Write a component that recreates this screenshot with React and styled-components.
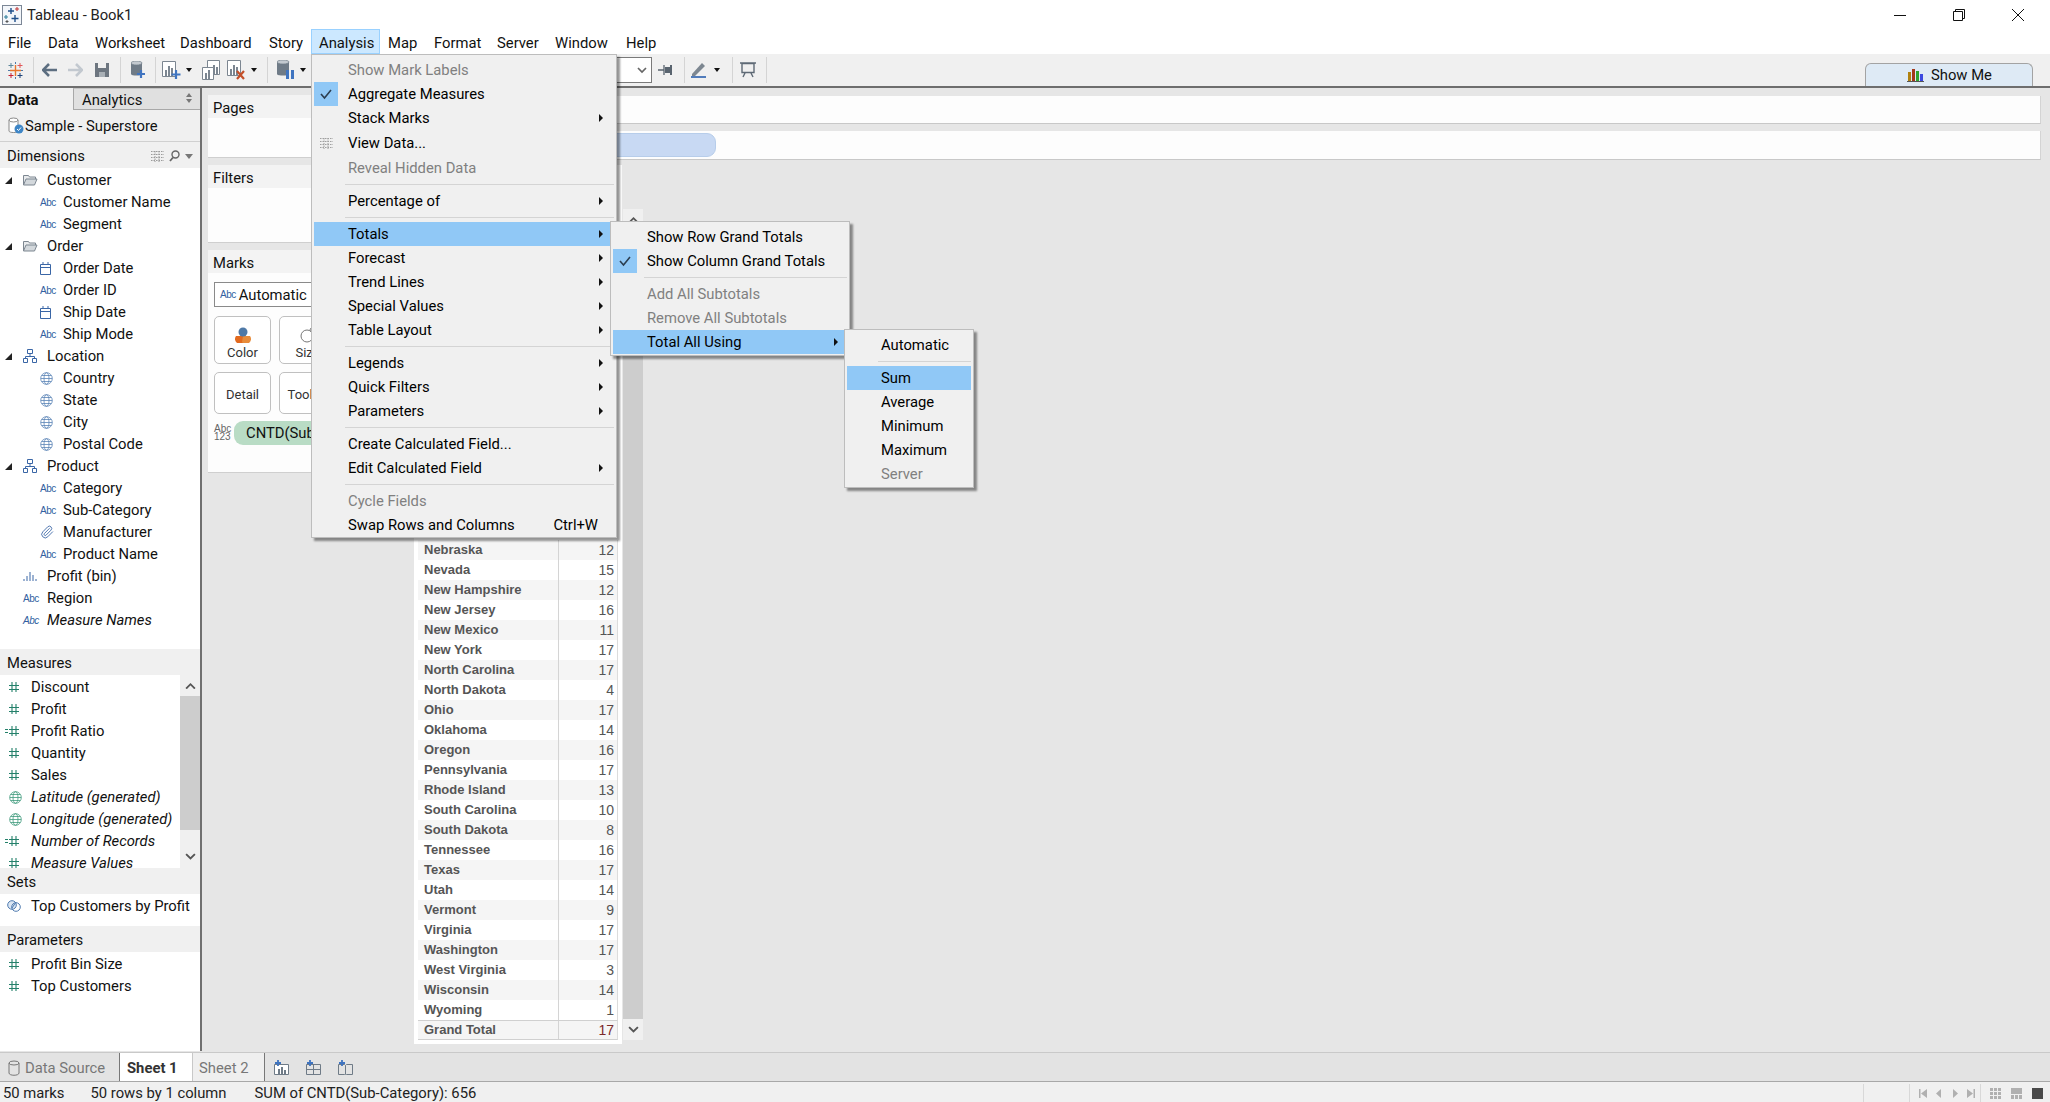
import React from "react";
import styled, { createGlobalStyle } from "styled-components";
import { Paperclip } from "lucide-react";

const UI_FONT = `Roboto, "Noto Sans", sans-serif`;

const GlobalStyle = createGlobalStyle`
    html, body {
        margin: 0;
        padding: 0;
        background: #fff;
    }
    body {
        font-family: ${UI_FONT};
        font-size: 14.8px;
        color: #111;
        overflow: hidden;
    }
    * {
        box-sizing: border-box;
    }
`;

const Page = styled.div`
    position: relative;
    width: 2050px;
    height: 1102px;
    overflow: hidden;
    display: flex;
    flex-direction: column;
    background: #fff;
`;

const TitleBar = styled.div`
    height: 29px;
    display: flex;
    align-items: center;
    padding-left: 2px;
    gap: 5px;
    color: #222;
`;

const WindowButtons = styled.div`
    margin-left: auto;
    display: flex;
    align-items: center;
    height: 100%;
    padding-right: 26px;
    gap: 47px;
`;

const MenuBar = styled.div`
    height: 25px;
    display: flex;
    align-items: stretch;
`;

const MenuName = styled.div`
    flex: none;
    width: ${(p) => p.$w}px;
    display: flex;
    align-items: center;
    padding: 2px 0 0 7px;
    border: 1px solid ${(p) => (p.$open ? "#99d1ff" : "transparent")};
    background: ${(p) => (p.$open ? "#cce8ff" : "transparent")};
`;

const Toolbar = styled.div`
    height: 34px;
    display: flex;
    align-items: center;
    padding-left: 7px;
    background: #f0f0f0;
    border-bottom: 2px solid #6e6e6e;
`;

const Tool = styled.span`
    display: inline-flex;
    flex: none;
    margin-left: ${(p) => p.$ml || 0}px;
`;

const ToolSep = styled.span`
    flex: none;
    width: 1px;
    height: 26px;
    background: #d4d4d4;
    margin-left: ${(p) => p.$ml || 0}px;
`;

const DropArrow = styled.span`
    flex: none;
    width: 0;
    height: 0;
    border-left: 3px solid transparent;
    border-right: 3px solid transparent;
    border-top: 4px solid #111;
    margin-left: ${(p) => p.$ml || 0}px;
`;

const ToolSelect = styled.div`
    flex: none;
    width: 90px;
    height: 26px;
    margin-left: ${(p) => p.$ml || 0}px;
    border: 1px solid #7a7a7a;
    background: #fff;
    display: flex;
    align-items: center;
    justify-content: flex-end;
    padding-right: 4px;
`;

const ShowMe = styled.div`
    margin-left: auto;
    margin-right: 17px;
    align-self: flex-end;
    width: 168px;
    height: 23px;
    display: flex;
    align-items: center;
    padding-left: 41px;
    gap: 7px;
    background: #deeaf5;
    border: 1px solid #a3a3a3;
    border-bottom: none;
    border-radius: 6px 6px 0 0;
`;

const Body = styled.div`
    flex: 1;
    display: flex;
    min-height: 0;
    background: #e6e6e6;
`;

const DataPane = styled.div`
    width: 202px;
    flex: none;
    display: flex;
    flex-direction: column;
    background: #fff;
    border-right: 2px solid #707070;
    margin-bottom: 1px;
`;

const PaneTabs = styled.div`
    height: 22px;
    display: flex;
    background: #f0f0f0;
`;

const PaneTab = styled.div`
    display: flex;
    align-items: center;
    font-weight: ${(p) => (p.$active ? 700 : 400)};
    width: ${(p) => (p.$active ? "73px" : "auto")};
    flex: ${(p) => (p.$active ? "none" : "1")};
    padding: 2px 0 0 8px;
    background: ${(p) => (p.$active ? "#f0f0f0" : "#e0e0e0")};
    border-left: ${(p) => (p.$active ? "none" : "1px solid #a8a8a8")};
    border-top: ${(p) => (p.$active ? "none" : "1px solid #c4c4c4")};
    border-bottom: ${(p) => (p.$active ? "none" : "1px solid #a8a8a8")};
`;

const SpinIcon = styled.span`
    margin-left: auto;
    margin-right: 8px;
    margin-bottom: 4px;
    display: inline-flex;
`;

const SourceRow = styled.div`
    height: 32px;
    display: flex;
    align-items: center;
    padding-left: 8px;
    gap: 1px;
    background: #f0f0f0;
    border-bottom: 1px solid #d0d0d0;
`;

const SectionHead = styled.div`
    height: 26px;
    flex: none;
    display: flex;
    align-items: center;
    padding: 2px 0 0 7px;
    background: #f0f0f0;
`;

const HeadTools = styled.div`
    margin-left: auto;
    display: flex;
    align-items: center;
    gap: 5px;
    padding-right: 7px;
`;

const Tree = styled.div`
    height: 481px;
    padding-top: 1px;
`;

const FieldRow = styled.div`
    height: 22px;
    display: flex;
    align-items: center;
    white-space: nowrap;
    padding-left: ${(p) => p.$pad}px;
    font-style: ${(p) => (p.$italic ? "italic" : "normal")};
`;

const IconSlot = styled.span`
    flex: none;
    width: ${(p) => p.$w}px;
    display: inline-flex;
    align-items: center;
`;

const NudgedIcon = styled.span`
    display: inline-flex;
    margin-left: ${(p) => p.$ml}px;
`;

const AbcMark = styled.span`
    font-family: "Liberation Sans", sans-serif;
    font-size: 10px;
    letter-spacing: -0.5px;
    color: #335f9f;
`;

const MeasureWrap = styled.div`
    height: 193px;
    flex: none;
    display: flex;
`;

const MeasureList = styled.div`
    flex: 1;
    overflow: hidden;
    padding-top: 1px;
`;

const MiniScroll = styled.div`
    width: 20px;
    flex: none;
    display: flex;
    flex-direction: column;
    align-items: center;
    background: #f0f0f0;
`;

const ScrollEnd = styled.div`
    height: ${(p) => p.$h}px;
    flex: none;
    width: 100%;
    display: flex;
    align-items: center;
    justify-content: center;
    padding-top: ${(p) => p.$pt || 0}px;
`;

const ScrollThumb = styled.div`
    flex: ${(p) => (p.$h ? "none" : "1")};
    height: ${(p) => (p.$h ? `${p.$h}px` : "auto")};
    width: 100%;
    background: #cdcdcd;
`;

const ParamBlock = styled.div`
    height: 32px;
    flex: none;
    padding-top: 1px;
`;

const CardsColumn = styled.div`
    width: 198px;
    flex: none;
    display: flex;
    flex-direction: column;
    gap: 7px;
    padding: 7px 0 0 6px;
`;

const Card = styled.div`
    height: ${(p) => p.$h}px;
    background: #fdfdfd;
    border-bottom: 1px solid #cfcfcf;
    display: flex;
    flex-direction: column;
`;

const CardHead = styled.div`
    height: 23px;
    flex: none;
    display: flex;
    align-items: center;
    padding: 2px 0 0 5px;
    background: #f3f3f3;
`;

const MarksBody = styled.div`
    padding: 9px 6px 0;
    display: flex;
    flex-direction: column;
`;

const MarkType = styled.div`
    height: 25px;
    border: 1px solid #8a8a8a;
    background: #fff;
    display: flex;
    align-items: center;
    padding-left: 5px;
    gap: 3px;
`;

const MarkButtons = styled.div`
    display: grid;
    grid-template-columns: 57px 57px 57px;
    grid-template-rows: 48px 42px;
    gap: 8px;
    margin-top: 9px;
`;

const MarkButton = styled.div`
    border: 1px solid #c0c0c0;
    border-radius: 5px;
    background: #fff;
    display: flex;
    flex-direction: column;
    align-items: center;
    justify-content: flex-end;
    padding-bottom: ${(p) => (p.$plain ? "11px" : "3px")};
    font-size: 13px;
    color: #333;
    gap: 2px;
`;

const PillRow = styled.div`
    display: flex;
    align-items: center;
    margin-top: 7px;
    gap: 5px;
`;

const StackMark = styled.span`
    font-family: "Liberation Sans", sans-serif;
    font-size: 10px;
    line-height: 8px;
    color: #666;
    width: 15px;
    text-align: center;
`;

const FieldPill = styled.div`
    width: 150px;
    height: 24px;
    display: flex;
    align-items: center;
    padding-left: 12px;
    white-space: nowrap;
    overflow: hidden;
    background: #b9dcc5;
    border-radius: 9px;
`;

const ViewColumn = styled.div`
    flex: 1;
    min-width: 0;
    display: flex;
    flex-direction: column;
    padding: 8px 9px 8px 8px;
`;

const Shelf = styled.div`
    height: ${(p) => p.$h}px;
    flex: none;
    margin-bottom: 7px;
    background: #fdfdfd;
    border-bottom: 1px solid #c8c8c8;
    border-right: 1px solid #d4d4d4;
    display: flex;
    align-items: center;
    padding-left: 100px;
`;

const ShelfPill = styled.div`
    width: 208px;
    height: 24px;
    background: #c8d9f3;
    border: 1px solid #b7cdea;
    border-radius: 9px;
`;

const Stage = styled.div`
    flex: 1;
    min-height: 0;
    margin-top: -2px;
    padding-left: 6px;
    display: flex;
    gap: 1px;
`;

const VizPanel = styled.div`
    width: 208px;
    flex: none;
    background: #fff;
    padding: 4px;
    display: flex;
    flex-direction: column;
    justify-content: flex-end;
`;

const DataRow = styled.div`
    height: 20px;
    flex: none;
    display: grid;
    grid-template-columns: 141px 1fr;
    background: ${(p) => (p.$odd ? "#f5f5f5" : "#fff")};
    border-right: 1px solid #dcdcdc;
    color: #555;
    font-family: "Liberation Sans", sans-serif;
    font-size: 13px;
    line-height: 20px;
`;

const TotalRow = styled(DataRow)`
    background: #f5f5f5;
    border-top: 1px solid #d0d0d0;
    border-bottom: 1px solid #d0d0d0;
    line-height: 18px;
`;

const RowName = styled.div`
    padding-left: 6px;
    font-weight: 700;
    border-right: 1px solid #d4d4d4;
`;

const RowValue = styled.div`
    text-align: right;
    padding-right: 3px;
    font-size: 14px;
    color: ${(p) => (p.$total ? "#7c2a2a" : "#555")};
`;

const VizScroll = styled(MiniScroll)`
    width: 20px;
    margin-top: 44px;
    margin-bottom: 4px;
`;

const TabStrip = styled.div`
    height: 30px;
    flex: none;
    display: flex;
    background: #e3e3e3;
    border-top: 1px solid #c9c9c9;
    border-bottom: 1px solid #a8a8a8;
`;

const SheetTab = styled.div`
    width: ${(p) => p.$w}px;
    flex: none;
    display: flex;
    align-items: center;
    gap: 5px;
    padding: 2px 0 0 ${(p) => p.$pad}px;
    font-weight: ${(p) => (p.$active ? 700 : 400)};
    color: ${(p) => (p.$active ? "#333" : "#777")};
    background: ${(p) => p.$bg};
    border-right: 1px solid ${(p) => p.$line};
`;

const TabTools = styled.div`
    display: flex;
    align-items: center;
    padding-left: 9px;
    gap: 17px;
`;

const StatusBar = styled.div`
    height: 20px;
    flex: none;
    display: flex;
    align-items: center;
    padding-top: 2px;
    background: #f0f0f0;
    color: #222;
`;

const StatusText = styled.span`
    margin-left: ${(p) => p.$ml}px;
    white-space: nowrap;
`;

const StatusRight = styled.div`
    margin-left: auto;
    display: flex;
    align-items: stretch;
    height: 100%;
`;

const StatusCell = styled.div`
    width: ${(p) => p.$w}px;
    display: flex;
    align-items: center;
    gap: ${(p) => p.$gap || 0}px;
    padding-left: ${(p) => p.$pad || 0}px;
    border-left: 1px solid #d8d8d8;
`;

const Dropdown = styled.div`
    position: absolute;
    left: ${(p) => p.$left}px;
    top: ${(p) => p.$top}px;
    width: ${(p) => p.$width}px;
    height: ${(p) => p.$height}px;
    padding: 3px 2px;
    background: #f0f0f0;
    border: 1px solid #bdbdbd;
    box-shadow: 3px 3px 2px rgba(0, 0, 0, 0.42);
`;

const MenuItem = styled.div`
    position: relative;
    height: 24px;
    margin-top: ${(p) => p.$mt || 0}px;
    display: flex;
    align-items: center;
    padding-left: 34px;
    padding-right: ${(p) => p.$pr || 11}px;
    white-space: nowrap;
    color: ${(p) => (p.$off ? "#808080" : "#000")};
    background: ${(p) => (p.$hot ? "#90c8f6" : "transparent")};
`;

const MenuCheck = styled.span`
    position: absolute;
    left: 0;
    top: 0;
    width: 24px;
    height: 24px;
    display: flex;
    align-items: center;
    justify-content: center;
    background: ${(p) => (p.$on ? "#90c8f6" : "transparent")};
`;

const SubArrow = styled.span`
    margin-left: auto;
    width: 0;
    height: 0;
    border-top: 4px solid transparent;
    border-bottom: 4px solid transparent;
    border-left: 4px solid #111;
`;

const Shortcut = styled.span`
    margin-left: auto;
    margin-right: 5px;
`;

const MenuSep = styled.div`
    height: 9px;
    margin-left: ${(p) => p.$ml || 31}px;
    display: flex;
    align-items: center;

    &::after {
        content: "";
        display: block;
        width: 100%;
        height: 1px;
        background: #d4d4d4;
    }
`;

const BLUE = "#3a66a6";
const TEAL = "#24806a";

const AppIcon = () => (
    <svg width="20" height="20" viewBox="0 0 20 20">
        <rect x="0.5" y="0.5" width="19" height="19" fill="#f3f6fa" stroke="#7c8796" />
        <path d="M9 3v6M6 6h6" stroke="#1f4f8a" strokeWidth="1.4" />
        <path d="M15 2v4M13 4h4" stroke="#c23b3b" strokeWidth="1.1" />
        <path d="M4 10v4M2 12h4" stroke="#2f7f9c" strokeWidth="1.1" />
        <path d="M13 10v7M9.5 13.500h7" stroke="#1f4f8a" strokeWidth="1.4" />
        <path d="M5 15v3M3.500 16.500h3" stroke="#555" strokeWidth="1" />
    </svg>
);

const TableauLogo = () => (
    <svg width="17" height="17" viewBox="0 0 17 17">
        <path d="M8.500 3v11M3 8.500h11" stroke="#e8762b" strokeWidth="1.400" />
        <path d="M4 1v5M1.500 3.500h5" stroke="#5b879b" strokeWidth="1" />
        <path d="M13 1v5M10.500 3.500h5" stroke="#e15759" strokeWidth="1" />
        <path d="M4 11v5M1.500 13.500h5" stroke="#c72035" strokeWidth="1" />
        <path d="M13 11v5M10.500 13.500h5" stroke="#1f447a" strokeWidth="1" />
        <path d="M1 8.500h2M14 8.500h2M8.500 0v2M8.500 15v2" stroke="#4e79a7" strokeWidth="1" />
    </svg>
);

const ArrowIcon = ({ color, flip }) => (
    <svg width="15" height="14" viewBox="0 0 15 14" style={flip ? { transform: "scaleX(-1)" } : undefined}>
        <path d="M7 1L1 7l6 6M2 7h13" fill="none" stroke={color} strokeWidth="2.600" />
    </svg>
);

const SaveIcon = () => (
    <svg width="14" height="14" viewBox="0 0 14 14">
        <path d="M0 0h14v14H0z" fill="#6d7680" />
        <path d="M3 0h8v5H3z" fill="#f0f0f0" />
        <path d="M4 9h6v5H4z" fill="#a9b0b6" />
    </svg>
);

const Cylinder = ({ x = 0, y = 0, w = 11, h = 15 }) => (
    <g>
        <path d={`M${x} ${y + 2}v${h - 4}c0 2 ${w} 2 ${w} 0v-${h - 4}z`} fill="#6f7b87" />
        <ellipse cx={x + w / 2} cy={y + 2} rx={w / 2} ry="2" fill="#c3c9cf" stroke="#6f7b87" strokeWidth="0.700" />
    </g>
);

const AddDataIcon = () => (
    <svg width="15" height="18" viewBox="0 0 15 18">
        <Cylinder />
        <path d="M10 9v8M6 13h8" stroke="#3f74c0" strokeWidth="2.200" />
    </svg>
);

const PauseDataIcon = () => (
    <svg width="17" height="20" viewBox="0 0 17 20">
        <Cylinder w={12} h={16} />
        <path d="M9 10h3v9H9zM14 10h3v9h-3z" fill="#3f74c0" />
    </svg>
);

const Bars = () => (
    <g>
        <path d="M.5 .5h13v15H.5z" fill="#fff" stroke="#7c8691" />
        <path d="M3 9h2v6H3zM6 5h2v10H6zM9 7h2v8H9z" fill="#7c8691" />
    </g>
);

const NewSheetIcon = () => (
    <svg width="20" height="19" viewBox="0 0 20 19">
        <Bars />
        <path d="M14 9v9M9.500 13.500h9" stroke="#3f74c0" strokeWidth="2.200" />
    </svg>
);

const DuplicateSheetIcon = () => (
    <svg width="18" height="20" viewBox="0 0 18 20">
        <path d="M5.500 .5h12v14h-12z" fill="#fff" stroke="#7c8691" />
        <path d="M8 9h2v5H8zM11 5h2v9h-2zM14 7h2v7h-2z" fill="#7c8691" />
        <path d="M.5 7.500h11v12H.5z" fill="#fff" stroke="#7c8691" />
        <path d="M3 13h2v6H3zM6 10h2v9H6z" fill="#7c8691" />
    </svg>
);

const ClearSheetIcon = () => (
    <svg width="19" height="20" viewBox="0 0 19 20">
        <Bars />
        <path d="M10 11l7 8M17 11l-7 8" stroke="#c4502a" strokeWidth="2.200" />
    </svg>
);

const PinIcon = () => (
    <svg width="16" height="14" viewBox="0 0 16 14">
        <path d="M0 7h6M6 2v10" stroke="#59646f" strokeWidth="1.300" fill="none" />
        <path d="M7 4h5v6H7zM12 2h2v10h-2z" fill="#59646f" />
    </svg>
);

const PenIcon = () => (
    <svg width="16" height="16" viewBox="0 0 16 16">
        <path d="M1 12L11 1l3 3L4 14H1z" fill="#7d8791" />
        <path d="M0 15h15" stroke="#3f6fb5" strokeWidth="1.800" />
    </svg>
);

const PresentIcon = () => (
    <svg width="16" height="16" viewBox="0 0 16 16">
        <path d="M0 1h16M2 1.500h12v9H2zM5 11l-2 4M11 11l2 4" fill="none" stroke="#5e6975" strokeWidth="1.400" />
    </svg>
);

const Chevron = ({ down, size = 11, color = "#555" }) => (
    <svg width={size} height={size * 0.7} viewBox="0 0 10 7">
        <path d={down ? "M1 1l4 4 4-4" : "M1 6l4-4 4 4"} fill="none" stroke={color} strokeWidth="1.700" />
    </svg>
);

const Triangle = () => (
    <svg width="7" height="7" viewBox="0 0 7 7">
        <path d="M7 0v7H0z" fill="#222" />
    </svg>
);

const FolderIcon = () => (
    <svg width="15" height="12" viewBox="0 0 15 12">
        <path d="M.5 11V1.500h5l1 1.500h6v2" fill="#e8eaec" stroke="#7d8791" />
        <path d="M.5 11l2.500-6h11l-2.500 6z" fill="#d3d8dc" stroke="#7d8791" />
    </svg>
);

const HierarchyIcon = () => (
    <svg width="14" height="14" viewBox="0 0 14 14" fill="none" stroke={BLUE}>
        <path d="M4.500 .5h5v4h-5zM.5 9.500h4v4h-4zM9.500 9.500h4v4h-4zM7 4.500v3M2.500 9.500v-2h9v2" />
    </svg>
);

const CalendarIcon = () => (
    <svg width="11" height="13" viewBox="0 0 11 13" fill="none" stroke={BLUE}>
        <path d="M.5 2.500h10v10H.5zM.5 5.500h10M3 0v3M8 0v3" />
    </svg>
);

const GlobeIcon = ({ color = "#5a84b6" }) => (
    <svg width="13" height="13" viewBox="0 0 13 13" fill="none" stroke={color} strokeWidth="0.800">
        <circle cx="6.500" cy="6.500" r="5.800" />
        <ellipse cx="6.500" cy="6.500" rx="2.500" ry="5.800" />
        <path d="M.8 6.500h11.400M1.800 3.500h9.400M1.800 9.500h9.400" />
    </svg>
);

const HashIcon = ({ ratio }) => (
    <svg width="16" height="12" viewBox="0 0 16 12" stroke={TEAL} fill="none" strokeWidth="1.100">
        <path d="M7 1v10M11 1v10M4 4.500h10M4 8.500h10" />
        {ratio && <path d="M0 4.500h3M0 7.500h3" />}
    </svg>
);

const SetIcon = () => (
    <svg width="14" height="12" viewBox="0 0 14 12" fill="none" stroke="#4f7bb0">
        <circle cx="5" cy="5" r="4.300" fill="#dbe6f3" />
        <circle cx="9" cy="7" r="4.300" />
        <path d="M5 8l4-6" />
    </svg>
);

const BinIcon = () => (
    <svg width="14" height="10" viewBox="0 0 14 10" stroke={BLUE}>
        <path d="M1 8v2M4 5v5M7 1v9M10 4v6M13 8v2" />
    </svg>
);

const SourceIcon = () => (
    <svg width="16" height="18" viewBox="0 0 16 18">
        <path d="M1 3v11c0 2 9 2 9 0V3z" fill="#fff" stroke="#8a8a8a" />
        <ellipse cx="5.500" cy="3" rx="4.500" ry="2" fill="#fff" stroke="#8a8a8a" />
        <circle cx="11" cy="12" r="4.500" fill="#3f86c6" />
        <path d="M9 12l1.500 1.500L13 10.500" fill="none" stroke="#fff" />
    </svg>
);

const SpinArrows = () => (
    <svg width="6" height="10" viewBox="0 0 6 10">
        <path d="M3 0l3 4H0zM3 10L0 6h6z" fill="#777" />
    </svg>
);

const ListGlyph = () => (
    <svg width="13" height="11" viewBox="0 0 13 11" stroke="#9a9a9a">
        <path d="M0 .5h13M0 3.500h13M0 6.500h13M0 9.500h13M4 0v11M8 0v11" strokeDasharray="1.500 1" />
    </svg>
);

const SearchGlyph = () => (
    <svg width="11" height="12" viewBox="0 0 11 12" fill="none" stroke="#666">
        <circle cx="6.500" cy="4.500" r="3.500" strokeWidth="1.400" />
        <path d="M4 7.500L1 11" strokeWidth="1.800" />
    </svg>
);

const HeadArrow = () => (
    <svg width="8" height="5" viewBox="0 0 8 5">
        <path d="M0 0h8L4 5z" fill="#777" />
    </svg>
);

const ColorGlyph = () => (
    <svg width="16" height="16" viewBox="0 0 16 16">
        <path d="M1 9a5 5 0 0 0 8 6L8 9z" fill="#e26a1f" />
        <path d="M15 9a5 5 0 0 1-8 6l1-6z" fill="#e88c3a" />
        <circle cx="8" cy="5" r="4.500" fill="#4e79a7" />
    </svg>
);

const SizeGlyph = () => (
    <svg width="16" height="16" viewBox="0 0 16 16" fill="#fff" stroke="#777">
        <circle cx="7" cy="9" r="6" />
        <circle cx="12" cy="3" r="2" />
    </svg>
);

const CheckMark = () => (
    <svg width="14" height="12" viewBox="0 0 14 12">
        <path d="M2 6l3.500 4L12 2" fill="none" stroke="#2c3e50" strokeWidth="1.600" />
    </svg>
);

const ViewDataGlyph = () => (
    <svg width="13" height="11" viewBox="0 0 13 11" stroke="#a0a0a0">
        <path d="M0 .5h13M0 3.500h13M0 6.500h13M0 9.500h13M4 0v11M8 0v11" strokeDasharray="1.500 1" />
    </svg>
);

const ShowMeBars = () => (
    <svg width="17" height="13" viewBox="0 0 17 13">
        <path d="M1 3h3v9H1z" fill="#b0820f" />
        <path d="M5 0h3v12H5z" fill="#a33a1a" />
        <path d="M9 2h3v10H9z" fill="#2ea62e" />
        <path d="M13 5h3v7h-3z" fill="#3a49e0" />
        <path d="M0 12.500h17" stroke="#555" />
    </svg>
);

const TabDbIcon = () => (
    <svg width="12" height="16" viewBox="0 0 12 16" fill="none" stroke="#777">
        <path d="M1 3v10c0 3 10 3 10 0V3" />
        <ellipse cx="6" cy="3" rx="5" ry="2" />
    </svg>
);

const NewWorksheetTab = () => (
    <svg width="15" height="15" viewBox="0 0 15 15">
        <path d="M.5 4.500h14v10H.5z" fill="#fff" stroke="#6f7b87" />
        <path d="M4 9h2v6H4zM7 7h2v8H7zM10 10h2v5h-2z" fill="#6f7b87" />
        <path d="M4 0v6M1 3h6" stroke="#3f74c0" strokeWidth="1.800" />
    </svg>
);

const NewDashTab = () => (
    <svg width="15" height="15" viewBox="0 0 15 15" fill="none">
        <path d="M.5 4.500h14v10H.5zM7.500 4.500v10M.5 9.500h14" stroke="#6f7b87" />
        <path d="M4 0v6M1 3h6" stroke="#3f74c0" strokeWidth="1.800" />
    </svg>
);

const NewStoryTab = () => (
    <svg width="15" height="15" viewBox="0 0 15 15" fill="none">
        <path d="M.5 4.500h6l1 1 1-1h6v10h-6l-1 .5-1-.5h-6zM7.500 5.500v9" stroke="#6f7b87" />
        <path d="M4 0v6M1 3h6" stroke="#3f74c0" strokeWidth="1.800" />
    </svg>
);

const NavGlyph = ({ d }) => (
    <svg width="8" height="9" viewBox="0 0 8 9">
        <path d={d} fill="#b0b0b0" />
    </svg>
);

const GridGlyph = ({ cols, fill, big }) => (
    <svg width="11" height="11" viewBox="0 0 11 11">
        {big === "all" && <path d="M0 0h11v11H0z" fill={fill} />}
        {big === "top" && <path d="M0 0h11v6H0z" fill={fill} />}
        {big === "top" && <path d="M0 7h3v4H0zM4 7h3v4H4zM8 7h3v4H8z" fill={fill} />}
        {cols && <path d="M0 0h3v3H0zM4 0h3v3H4zM8 0h3v3H8zM0 4h3v3H0zM4 4h3v3H4zM8 4h3v3H8zM0 8h3v3H0zM4 8h3v3H4zM8 8h3v3H8z" fill={fill} />}
    </svg>
);

const MENUS = [
    ["File", 40], ["Data", 47], ["Worksheet", 85], ["Dashboard", 89], ["Story", 50], ["Analysis", 69],
    ["Map", 46], ["Format", 63], ["Server", 58], ["Window", 71], ["Help", 50],
];

const abc = <AbcMark>Abc</AbcMark>;

const TREE = [
    { kind: "group", icon: <FolderIcon />, label: "Customer" },
    { kind: "child", icon: abc, label: "Customer Name" },
    { kind: "child", icon: abc, label: "Segment" },
    { kind: "group", icon: <FolderIcon />, label: "Order" },
    { kind: "child", icon: <CalendarIcon />, label: "Order Date" },
    { kind: "child", icon: abc, label: "Order ID" },
    { kind: "child", icon: <CalendarIcon />, label: "Ship Date" },
    { kind: "child", icon: abc, label: "Ship Mode" },
    { kind: "group", icon: <HierarchyIcon />, label: "Location" },
    { kind: "child", icon: <GlobeIcon />, label: "Country" },
    { kind: "child", icon: <GlobeIcon />, label: "State" },
    { kind: "child", icon: <GlobeIcon />, label: "City" },
    { kind: "child", icon: <GlobeIcon />, label: "Postal Code" },
    { kind: "group", icon: <HierarchyIcon />, label: "Product" },
    { kind: "child", icon: abc, label: "Category" },
    { kind: "child", icon: abc, label: "Sub-Category" },
    { kind: "child", icon: <Paperclip size={14} color={BLUE} strokeWidth={1.5} />, label: "Manufacturer" },
    { kind: "child", icon: abc, label: "Product Name" },
    { kind: "leaf", icon: <BinIcon />, label: "Profit (bin)" },
    { kind: "leaf", icon: abc, label: "Region" },
    { kind: "leaf", icon: abc, label: "Measure Names", italic: true },
];

const generatedGlobe = (
    <NudgedIcon $ml={4}>
        <GlobeIcon color="#3f9a7c" />
    </NudgedIcon>
);

const MEASURES = [
    { icon: <HashIcon />, label: "Discount" },
    { icon: <HashIcon />, label: "Profit" },
    { icon: <HashIcon ratio />, label: "Profit Ratio" },
    { icon: <HashIcon />, label: "Quantity" },
    { icon: <HashIcon />, label: "Sales" },
    { icon: generatedGlobe, label: "Latitude (generated)", italic: true },
    { icon: generatedGlobe, label: "Longitude (generated)", italic: true },
    { icon: <HashIcon ratio />, label: "Number of Records", italic: true },
    { icon: <HashIcon />, label: "Measure Values", italic: true },
];

const STATES = [
    ["Nebraska", 12], ["Nevada", 15], ["New Hampshire", 12], ["New Jersey", 16], ["New Mexico", 11],
    ["New York", 17], ["North Carolina", 17], ["North Dakota", 4], ["Ohio", 17], ["Oklahoma", 14],
    ["Oregon", 16], ["Pennsylvania", 17], ["Rhode Island", 13], ["South Carolina", 10], ["South Dakota", 8],
    ["Tennessee", 16], ["Texas", 17], ["Utah", 14], ["Vermont", 9], ["Virginia", 17],
    ["Washington", 17], ["West Virginia", 3], ["Wisconsin", 14], ["Wyoming", 1],
];

function TreeRow({ item }) {
    if (item.kind === "group") {
        return (
            <FieldRow $pad={5}>
                <IconSlot $w={18}><Triangle /></IconSlot>
                <IconSlot $w={24}>{item.icon}</IconSlot>
                {item.label}
            </FieldRow>
        );
    }
    return (
        <FieldRow $pad={item.kind === "child" ? 40 : 23} $italic={item.italic}>
            <IconSlot $w={item.kind === "child" ? 23 : 24}>{item.icon}</IconSlot>
            {item.label}
        </FieldRow>
    );
}

function MeasureRow({ icon, label, italic }) {
    return (
        <FieldRow $pad={5} $italic={italic}>
            <IconSlot $w={26}>{icon}</IconSlot>
            {label}
        </FieldRow>
    );
}

function AnalysisMenu() {
    return (
        <Dropdown $left={311} $top={54} $width={306} $height={484}>
            <MenuItem $off>Show Mark Labels</MenuItem>
            <MenuItem>
                <MenuCheck $on><CheckMark /></MenuCheck>
                Aggregate Measures
            </MenuItem>
            <MenuItem>Stack Marks<SubArrow /></MenuItem>
            <MenuItem $mt={1}>
                <MenuCheck><ViewDataGlyph /></MenuCheck>
                View Data...
            </MenuItem>
            <MenuItem $mt={1} $off>Reveal Hidden Data</MenuItem>
            <MenuSep />
            <MenuItem>Percentage of<SubArrow /></MenuItem>
            <MenuSep />
            <MenuItem $hot>Totals<SubArrow /></MenuItem>
            <MenuItem>Forecast<SubArrow /></MenuItem>
            <MenuItem>Trend Lines<SubArrow /></MenuItem>
            <MenuItem>Special Values<SubArrow /></MenuItem>
            <MenuItem>Table Layout<SubArrow /></MenuItem>
            <MenuSep />
            <MenuItem>Legends<SubArrow /></MenuItem>
            <MenuItem>Quick Filters<SubArrow /></MenuItem>
            <MenuItem>Parameters<SubArrow /></MenuItem>
            <MenuSep />
            <MenuItem>Create Calculated Field...</MenuItem>
            <MenuItem>Edit Calculated Field<SubArrow /></MenuItem>
            <MenuSep />
            <MenuItem $off>Cycle Fields</MenuItem>
            <MenuItem>Swap Rows and Columns<Shortcut>Ctrl+W</Shortcut></MenuItem>
        </Dropdown>
    );
}

function TotalsMenu() {
    return (
        <Dropdown $left={610} $top={221} $width={240} $height={135}>
            <MenuItem>Show Row Grand Totals</MenuItem>
            <MenuItem>
                <MenuCheck $on><CheckMark /></MenuCheck>
                Show Column Grand Totals
            </MenuItem>
            <MenuSep />
            <MenuItem $off>Add All Subtotals</MenuItem>
            <MenuItem $off>Remove All Subtotals</MenuItem>
            <MenuItem $hot $pr={9}>Total All Using<SubArrow /></MenuItem>
        </Dropdown>
    );
}

function TotalUsingMenu() {
    return (
        <Dropdown $left={844} $top={329} $width={130} $height={159}>
            <MenuItem>Automatic</MenuItem>
            <MenuSep />
            <MenuItem $hot>Sum</MenuItem>
            <MenuItem>Average</MenuItem>
            <MenuItem>Minimum</MenuItem>
            <MenuItem>Maximum</MenuItem>
            <MenuItem $off>Server</MenuItem>
        </Dropdown>
    );
}

function App() {
    return (
        <Page>
            <GlobalStyle />
            <TitleBar>
                <AppIcon />
                Tableau - Book1
                <WindowButtons>
                    <svg width="12" height="12" viewBox="0 0 12 12"><path d="M0 6.500h12" stroke="#111" /></svg>
                    <svg width="12" height="12" viewBox="0 0 12 12" fill="none" stroke="#111"><path d="M.5 2.500h9v9h-9zM2.500 2.500v-2h9v9h-2" /></svg>
                    <svg width="12" height="12" viewBox="0 0 12 12" stroke="#111"><path d="M0 0l12 12M12 0L0 12" /></svg>
                </WindowButtons>
            </TitleBar>

            <MenuBar>
                {MENUS.map(([name, width]) => (
                    <MenuName key={name} $w={width} $open={name === "Analysis"}>{name}</MenuName>
                ))}
            </MenuBar>

            <Toolbar>
                <Tool><TableauLogo /></Tool>
                <ToolSep $ml={9} />
                <Tool $ml={8}><ArrowIcon color="#5c6e80" /></Tool>
                <Tool $ml={11}><ArrowIcon color="#c2c8cf" flip /></Tool>
                <Tool $ml={12}><SaveIcon /></Tool>
                <ToolSep $ml={11} />
                <Tool $ml={10}><AddDataIcon /></Tool>
                <ToolSep $ml={9} />
                <Tool $ml={6}><NewSheetIcon /></Tool>
                <DropArrow $ml={4} />
                <Tool $ml={10}><DuplicateSheetIcon /></Tool>
                <Tool $ml={7}><ClearSheetIcon /></Tool>
                <DropArrow $ml={5} />
                <ToolSep $ml={10} />
                <Tool $ml={9}><PauseDataIcon /></Tool>
                <DropArrow $ml={6} />
                <ToolSelect $ml={256}><Chevron down color="#666" size={10} /></ToolSelect>
                <Tool $ml={6}><PinIcon /></Tool>
                <ToolSep $ml={10} />
                <Tool $ml={6}><PenIcon /></Tool>
                <DropArrow $ml={7} />
                <ToolSep $ml={12} />
                <Tool $ml={7}><PresentIcon /></Tool>
                <ToolSep $ml={10} />
                <ShowMe>
                    <ShowMeBars />
                    Show Me
                </ShowMe>
            </Toolbar>

            <Body>
                <DataPane>
                    <PaneTabs>
                        <PaneTab $active>Data</PaneTab>
                        <PaneTab>
                            Analytics
                            <SpinIcon><SpinArrows /></SpinIcon>
                        </PaneTab>
                    </PaneTabs>
                    <SourceRow>
                        <SourceIcon />
                        Sample - Superstore
                    </SourceRow>
                    <SectionHead>
                        Dimensions
                        <HeadTools>
                            <ListGlyph />
                            <SearchGlyph />
                            <HeadArrow />
                        </HeadTools>
                    </SectionHead>
                    <Tree>
                        {TREE.map((item) => (
                            <TreeRow key={item.label} item={item} />
                        ))}
                    </Tree>

                    <SectionHead>Measures</SectionHead>
                    <MeasureWrap>
                        <MeasureList>
                            {MEASURES.map((m) => (
                                <MeasureRow key={m.label} {...m} />
                            ))}
                        </MeasureList>
                        <MiniScroll>
                            <ScrollEnd $h={21}><Chevron /></ScrollEnd>
                            <ScrollThumb $h={134} />
                            <ScrollEnd $h={38} $pt={16}><Chevron down /></ScrollEnd>
                        </MiniScroll>
                    </MeasureWrap>

                    <SectionHead>Sets</SectionHead>
                    <ParamBlock>
                        <MeasureRow
                            icon={<NudgedIcon $ml={2}><SetIcon /></NudgedIcon>}
                            label="Top Customers by Profit"
                        />
                    </ParamBlock>

                    <SectionHead>Parameters</SectionHead>
                    <ParamBlock>
                        <MeasureRow icon={<HashIcon />} label="Profit Bin Size" />
                        <MeasureRow icon={<HashIcon />} label="Top Customers" />
                    </ParamBlock>
                </DataPane>

                <CardsColumn>
                    <Card $h={63}>
                        <CardHead>Pages</CardHead>
                    </Card>
                    <Card $h={78}>
                        <CardHead>Filters</CardHead>
                    </Card>
                    <Card $h={223}>
                        <CardHead>Marks</CardHead>
                        <MarksBody>
                            <MarkType>
                                <AbcMark>Abc</AbcMark>
                                Automatic
                            </MarkType>
                            <MarkButtons>
                                <MarkButton><ColorGlyph />Color</MarkButton>
                                <MarkButton><SizeGlyph />Size</MarkButton>
                                <MarkButton>Label</MarkButton>
                                <MarkButton $plain>Detail</MarkButton>
                                <MarkButton $plain>Tooltip</MarkButton>
                            </MarkButtons>
                            <PillRow>
                                <StackMark>Abc 123</StackMark>
                                <FieldPill>CNTD(Sub-Category)</FieldPill>
                            </PillRow>
                        </MarksBody>
                    </Card>
                </CardsColumn>

                <ViewColumn>
                    <Shelf $h={28} />
                    <Shelf $h={29}>
                        <ShelfPill />
                    </Shelf>
                    <Stage>
                        <VizPanel>
                            {STATES.map(([name, value], i) => (
                                <DataRow key={name} $odd={i % 2 === 0}>
                                    <RowName>{name}</RowName>
                                    <RowValue>{value}</RowValue>
                                </DataRow>
                            ))}
                            <TotalRow>
                                <RowName>Grand Total</RowName>
                                <RowValue $total>17</RowValue>
                            </TotalRow>
                        </VizPanel>
                        <VizScroll>
                            <ScrollEnd $h={21}><Chevron /></ScrollEnd>
                            <ScrollThumb />
                            <ScrollEnd $h={21}><Chevron down /></ScrollEnd>
                        </VizScroll>
                    </Stage>
                </ViewColumn>
            </Body>

            <TabStrip>
                <SheetTab $w={120} $pad={8} $bg="#e3e3e3" $line="#777"><TabDbIcon />Data Source</SheetTab>
                <SheetTab $w={73} $pad={7} $active $bg="#fff" $line="#c8c8c8">Sheet 1</SheetTab>
                <SheetTab $w={72} $pad={6} $bg="#efefef" $line="#777">Sheet 2</SheetTab>
                <TabTools>
                    <NewWorksheetTab />
                    <NewDashTab />
                    <NewStoryTab />
                </TabTools>
            </TabStrip>

            <StatusBar>
                <StatusText $ml={3}>50 marks</StatusText>
                <StatusText $ml={26}>50 rows by 1 column</StatusText>
                <StatusText $ml={28}>SUM of CNTD(Sub-Category): 656</StatusText>
                <StatusRight>
                    <StatusCell $w={46} />
                    <StatusCell $w={71} $pad={9} $gap={8}>
                        <NavGlyph d="M0 0h1.500v9H0zM8 0v9L2 4.500z" />
                        <NavGlyph d="M6 0v9L1 4.500z" />
                        <NavGlyph d="M2 0v9l5-4.500z" />
                        <NavGlyph d="M6.500 0H8v9H6.500zM0 0v9l6-4.500z" />
                    </StatusCell>
                    <StatusCell $w={70} $pad={9} $gap={10}>
                        <GridGlyph cols fill="#b0b0b0" />
                        <GridGlyph big="top" fill="#b0b0b0" />
                        <GridGlyph big="all" fill="#4a4a4a" />
                    </StatusCell>
                </StatusRight>
            </StatusBar>

            <AnalysisMenu />
            <TotalsMenu />
            <TotalUsingMenu />
        </Page>
    );
}

export default App;
